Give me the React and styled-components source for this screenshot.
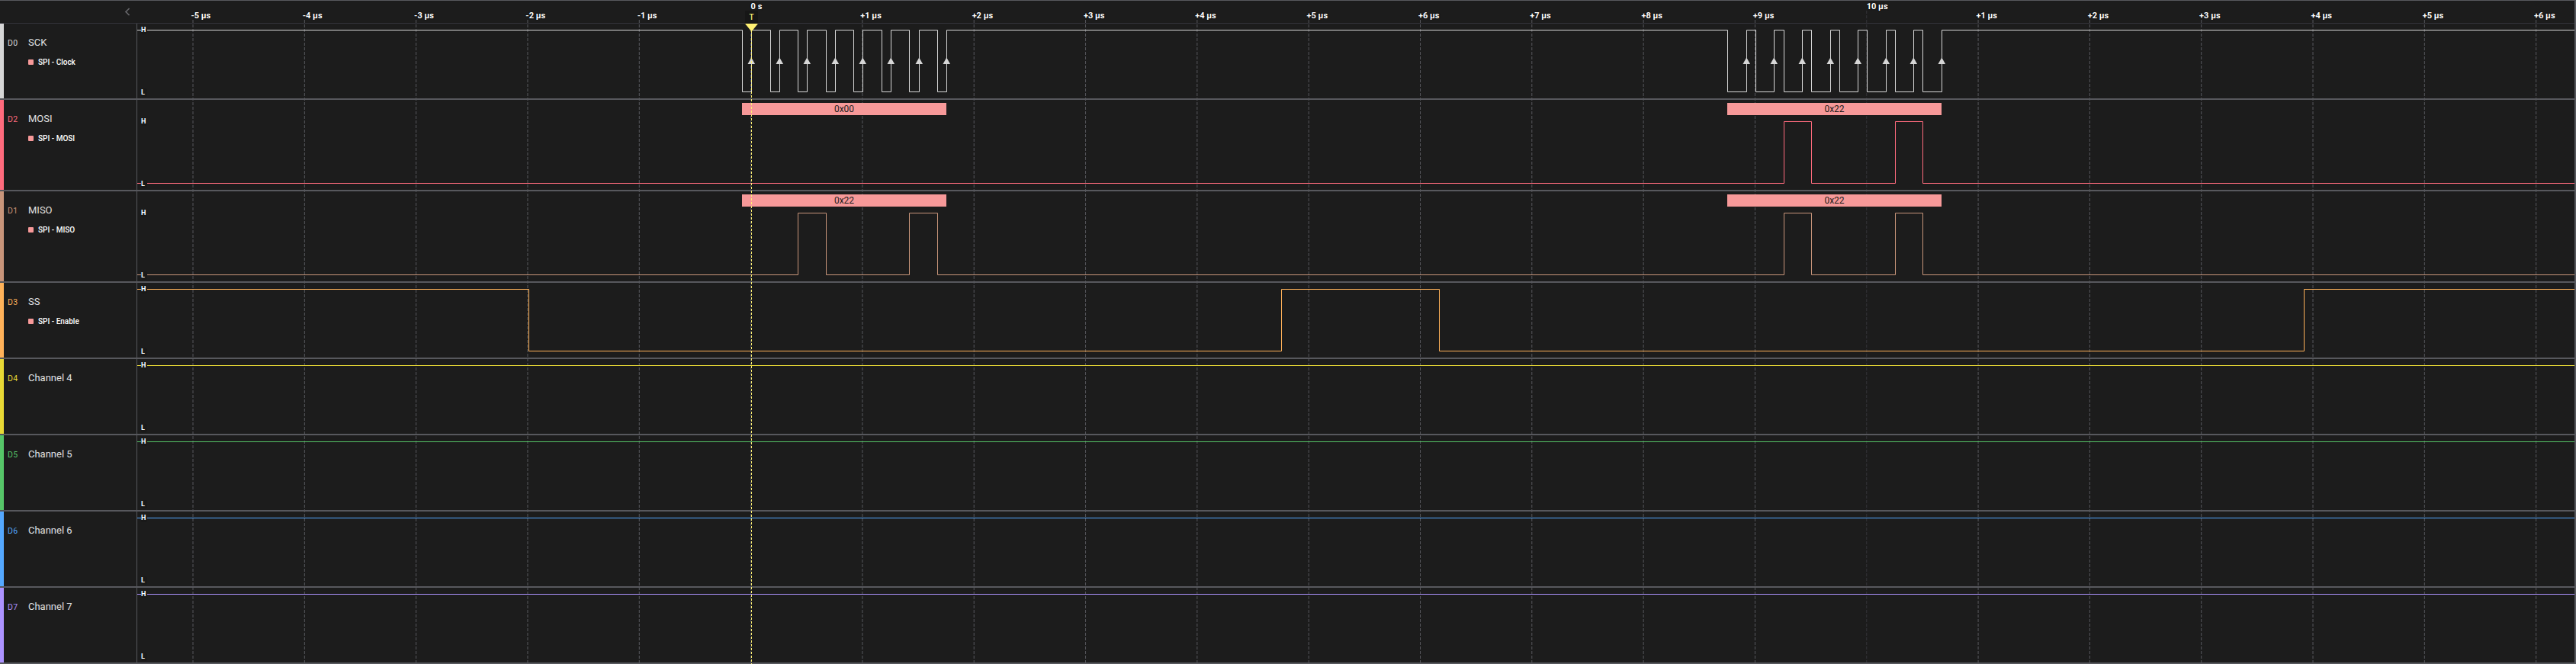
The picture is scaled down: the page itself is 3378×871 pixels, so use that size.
import React from "react";
import styled, { createGlobalStyle } from "styled-components";

const GlobalStyle = createGlobalStyle`
  html, body { margin: 0; background: #1c1c1c; overflow: hidden; }
  * { box-sizing: border-box; }
`;

const SIDEBAR = 180;
const WIDTH = 3378;
const HEIGHT = 871;
const HIGH = 8.5;
const SWING = 81;

const tickX = (k) => 985 + 146.316 * k;

const Screen = styled.div`
  position: relative;
  width: ${WIDTH}px;
  height: ${HEIGHT}px;
  overflow: hidden;
  display: flex;
  flex-direction: column;
  background: #1c1c1c;
  border-top: 1px solid #57585d;
  border-right: 2px solid #57585d;
  font-family: Roboto, "Liberation Sans", sans-serif;
  color: #d6d6d6;
`;

const Overlay = styled.svg`
  position: absolute;
  left: 0;
  top: -1px;
  pointer-events: none;
`;

const Header = styled.header`
  position: relative;
  flex: none;
  display: flex;
  height: 30px;
  border-bottom: 1px solid #34343b;
`;

const HeaderSide = styled.div`
  width: ${SIDEBAR}px;
  padding: 9px 9px 0 0;
  display: flex;
  justify-content: flex-end;
`;

const TickLabel = styled.span`
  position: absolute;
  left: ${(p) => p.$x}px;
  top: ${(p) => (p.$major ? 1 : 13)}px;
  font-size: 11px;
  line-height: 14px;
  font-weight: 700;
  white-space: nowrap;
  color: #fff;
  text-shadow: 0 0 2px #000;
`;

const Row = styled.section`
  position: relative;
  flex: none;
  display: flex;
  height: ${(p) => p.$height}px;
  border-bottom: 2px solid #57585d;
`;

const ChannelCell = styled.div`
  width: ${SIDEBAR}px;
  display: flex;
  background: #1c1c1c;
  border-left: 5px solid ${(p) => p.$color};
  border-right: 1px solid #57585d;
`;

const ChannelId = styled.div`
  width: 32px;
  padding: 19px 0 0 5px;
  font-size: 10.5px;
  line-height: 14px;
  letter-spacing: 0.3px;
  color: ${(p) => p.$color};
`;

const ChannelInfo = styled.div`
  display: flex;
  flex-direction: column;
  gap: 9px;
  padding-top: 17px;
`;

const ChannelName = styled.div`
  font-size: 13px;
  line-height: 16px;
  color: #e0e0e0;
`;

const AnalyzerTag = styled.div`
  display: flex;
  align-items: center;
  gap: 6px;
  font-size: 10px;
  line-height: 17px;
  font-weight: 500;
  color: #fff;
`;

const Swatch = styled.i`
  width: 7px;
  height: 7px;
  border-radius: 1px;
  background: #f79999;
`;

const WaveCell = styled.div`
  position: relative;
  flex: 1;
`;

const Wave = styled.svg`
  display: block;
`;

const LevelLabel = styled.span`
  position: absolute;
  left: 5px;
  top: ${(p) => p.$y - 5}px;
  width: 8px;
  font-size: 9px;
  line-height: 11px;
  font-weight: 700;
  color: #fff;
  background: #191919;
  border-radius: 3px;
`;

const Frame = styled.div`
  position: absolute;
  left: ${(p) => p.$from - SIDEBAR}px;
  top: 4px;
  width: ${(p) => p.$to - p.$from}px;
  height: 16px;
  font-size: 12px;
  line-height: 16px;
  text-align: center;
  color: #1c1c1c;
  background: #f79999;
`;

const TriggerFlag = styled.div`
  position: absolute;
  left: 977px;
  top: 13px;
  width: 17px;
  height: 17px;
  font-size: 10px;
  line-height: 18px;
  font-weight: 500;
  text-align: center;
  color: #fff173;
  background: #161616;
`;

const sckEdges = [
  973, 985, 1010, 1022, 1046, 1058, 1083, 1095, 1119, 1131, 1156, 1168, 1192,
  1205, 1229, 1241, 2265, 2290, 2302, 2326, 2339, 2363, 2375, 2400, 2412, 2436,
  2448, 2473, 2485, 2509, 2521, 2546,
];

const channels = [
  { id: "D0", name: "SCK", tag: "SPI - Clock", color: "#d6d6d6", start: 1, edges: sckEdges, arrows: true },
  {
    id: "D2", name: "MOSI", tag: "SPI - MOSI", color: "#ff6b7d", start: 0,
    edges: [2339, 2375, 2485, 2521],
    frames: [[973, 1241, "0x00"], [2265, 2546, "0x22"]],
  },
  {
    id: "D1", name: "MISO", tag: "SPI - MISO", color: "#c8957a", start: 0,
    edges: [1046, 1083, 1192, 1229, 2339, 2375, 2485, 2521],
    frames: [[973, 1241, "0x22"], [2265, 2546, "0x22"]],
  },
  { id: "D3", name: "SS", tag: "SPI - Enable", color: "#ffb259", start: 1, edges: [693, 1680, 1887, 3021] },
  { id: "D4", name: "Channel 4", color: "#e8d935", start: 1, edges: [] },
  { id: "D5", name: "Channel 5", color: "#56c568", start: 1, edges: [] },
  { id: "D6", name: "Channel 6", color: "#54a8ff", start: 1, edges: [] },
  { id: "D7", name: "Channel 7", color: "#ac92ff", start: 1, edges: [] },
];

const ticks = [];
for (let k = -5; k <= 16; k++) {
  const major = k === 0 || k === 10;
  const text = k === 0 ? "0 s" : k === 10 ? "10 µs" : k < 0 ? `${k} µs` : `+${k % 10} µs`;
  ticks.push({ k, x: tickX(k) - 0.4, major, text });
}

function wavePath(start, edges, high) {
  let level = start;
  const y = () => (level ? high : high + SWING);
  let d = `M0 ${y()}`;
  edges.forEach((e) => {
    d += `H${e - SIDEBAR + 0.5}`;
    level = level ? 0 : 1;
    d += `V${y()}`;
  });
  return d + `H${WIDTH - SIDEBAR - 2}`;
}

function Channel({ id, name, tag, color, start, edges, frames, arrows }) {
  const high = HIGH + (frames ? 20 : 0);
  const height = frames ? 120 : 100;
  return (
    <Row $height={height}>
      <ChannelCell $color={color}>
        <ChannelId $color={color}>{id}</ChannelId>
        <ChannelInfo>
          <ChannelName>{name}</ChannelName>
          {tag && (
            <AnalyzerTag>
              <Swatch />
              {tag}
            </AnalyzerTag>
          )}
        </ChannelInfo>
      </ChannelCell>
      <WaveCell>
        <Wave width={WIDTH - SIDEBAR - 2} height={height - 2}>
          <path d={wavePath(start, edges, high)} fill="none" stroke={color} strokeWidth="1" />
          {arrows &&
            edges
              .filter((_, i) => i % 2 === 1)
              .map((e) => (
                <path key={e} fill={color} d={`M${e - SIDEBAR + 0.3} 44.5l4.8 8.5h-9.6z`} />
              ))}
        </Wave>
        <LevelLabel $y={high - 0.5}>H</LevelLabel>
        <LevelLabel $y={high + SWING + 0.5}>L</LevelLabel>
        {frames &&
          frames.map(([from, to, value]) => (
            <Frame key={from} $from={from} $to={to}>
              {value}
            </Frame>
          ))}
      </WaveCell>
    </Row>
  );
}

export default function App() {
  return (
    <>
      <GlobalStyle />
      <Screen>
        <Overlay width={WIDTH} height={HEIGHT}>
          {ticks.map((t) => (
            <line
              key={t.k}
              x1={t.x}
              x2={t.x}
              y1={t.major ? 14 : 26}
              y2={HEIGHT}
              stroke={t.k === 10 ? "#333338" : "#57585d"}
              strokeWidth="1"
              strokeDasharray="4 2"
            />
          ))}
        </Overlay>
        <Header>
          <HeaderSide>
            <svg width="8" height="11" viewBox="0 0 8 11" fill="none" stroke="#66666a" strokeWidth="1.7">
              <path d="M6.6 1L2 5.5L6.6 10" />
            </svg>
          </HeaderSide>
          {ticks.map((t) => (
            <TickLabel key={t.k} $x={t.major ? t.x : t.x - 2.6} $major={t.major}>
              {t.text}
            </TickLabel>
          ))}
          <TriggerFlag>T</TriggerFlag>
        </Header>
        {channels.map((c) => (
          <Channel key={c.id} {...c} />
        ))}
        <Overlay width={WIDTH} height={HEIGHT}>
          <line x1="985.5" x2="985.5" y1="40" y2={HEIGHT} stroke="#fff173" strokeWidth="1" strokeDasharray="3 2" />
          <path d="M977 31H994L985.5 41.5Z" fill="#fff173" />
        </Overlay>
      </Screen>
    </>
  );
}
